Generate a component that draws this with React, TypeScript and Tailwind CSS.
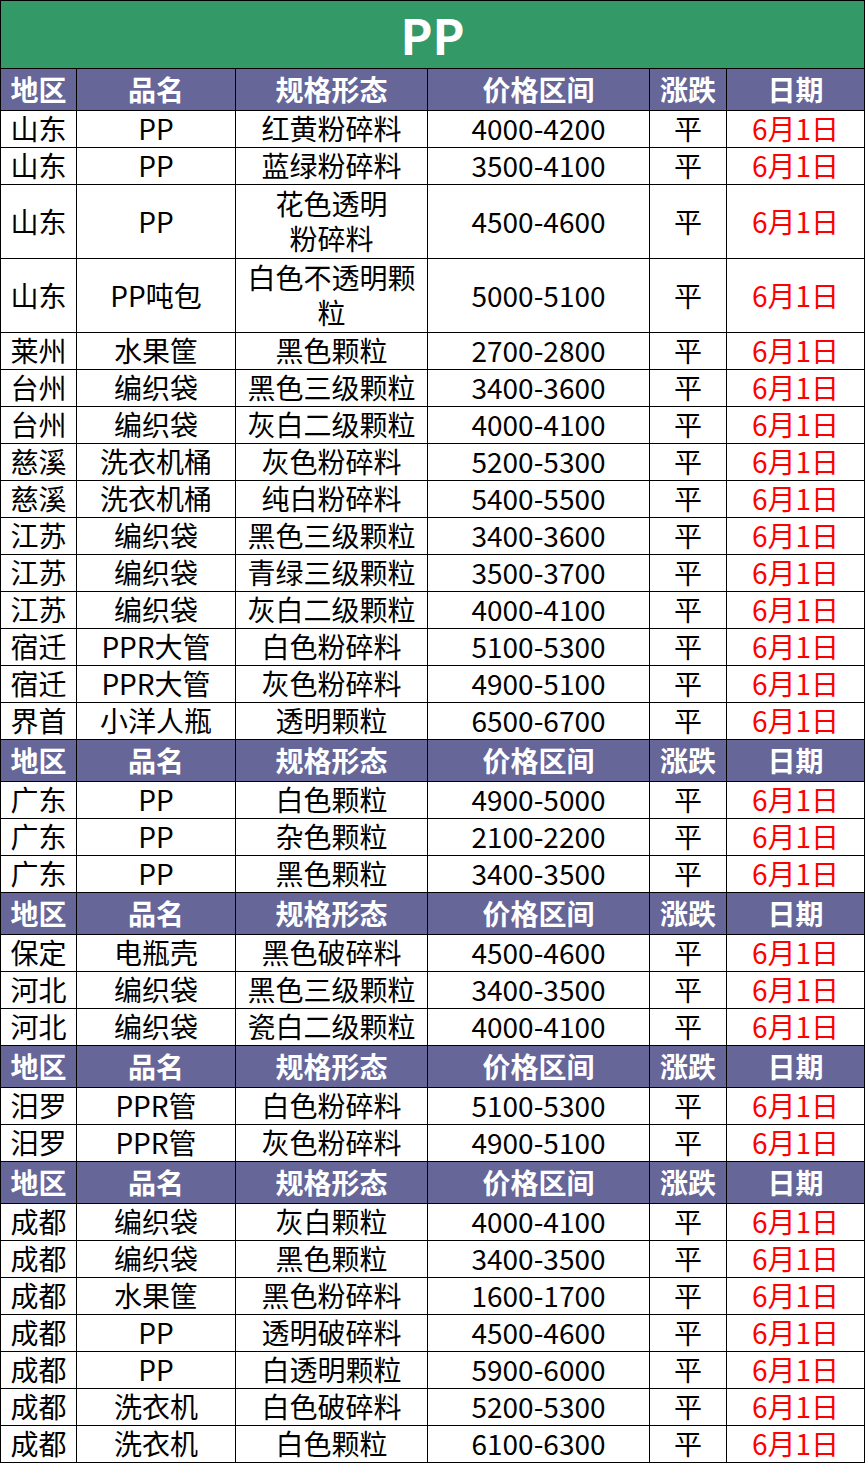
type Row = [string, string, string | string[], string];

const sections: Row[][] = [
  [
    ["山东", "PP", "红黄粉碎料", "4000-4200"],
    ["山东", "PP", "蓝绿粉碎料", "3500-4100"],
    ["山东", "PP", ["花色透明", "粉碎料"], "4500-4600"],
    ["山东", "PP吨包", ["白色不透明颗", "粒"], "5000-5100"],
    ["莱州", "水果筐", "黑色颗粒", "2700-2800"],
    ["台州", "编织袋", "黑色三级颗粒", "3400-3600"],
    ["台州", "编织袋", "灰白二级颗粒", "4000-4100"],
    ["慈溪", "洗衣机桶", "灰色粉碎料", "5200-5300"],
    ["慈溪", "洗衣机桶", "纯白粉碎料", "5400-5500"],
    ["江苏", "编织袋", "黑色三级颗粒", "3400-3600"],
    ["江苏", "编织袋", "青绿三级颗粒", "3500-3700"],
    ["江苏", "编织袋", "灰白二级颗粒", "4000-4100"],
    ["宿迁", "PPR大管", "白色粉碎料", "5100-5300"],
    ["宿迁", "PPR大管", "灰色粉碎料", "4900-5100"],
    ["界首", "小洋人瓶", "透明颗粒", "6500-6700"],
  ],
  [
    ["广东", "PP", "白色颗粒", "4900-5000"],
    ["广东", "PP", "杂色颗粒", "2100-2200"],
    ["广东", "PP", "黑色颗粒", "3400-3500"],
  ],
  [
    ["保定", "电瓶壳", "黑色破碎料", "4500-4600"],
    ["河北", "编织袋", "黑色三级颗粒", "3400-3500"],
    ["河北", "编织袋", "瓷白二级颗粒", "4000-4100"],
  ],
  [
    ["汨罗", "PPR管", "白色粉碎料", "5100-5300"],
    ["汨罗", "PPR管", "灰色粉碎料", "4900-5100"],
  ],
  [
    ["成都", "编织袋", "灰白颗粒", "4000-4100"],
    ["成都", "编织袋", "黑色颗粒", "3400-3500"],
    ["成都", "水果筐", "黑色粉碎料", "1600-1700"],
    ["成都", "PP", "透明破碎料", "4500-4600"],
    ["成都", "PP", "白透明颗粒", "5900-6000"],
    ["成都", "洗衣机", "白色破碎料", "5200-5300"],
    ["成都", "洗衣机", "白色颗粒", "6100-6300"],
  ],
];

const headers = ["地区", "品名", "规格形态", "价格区间", "涨跌", "日期"];
const grid = "grid grid-cols-[76px_159px_192px_222px_77px_138px]";
const cell = "flex items-center justify-center border-r border-b border-black text-center pb-[2px]";

function HeaderRow() {
  return (
    <div className={`${grid} h-[42px] bg-[#666699] text-white font-bold`}>
      {headers.map((h) => (
        <div key={h} className={cell}>
          {h}
        </div>
      ))}
    </div>
  );
}

function DataRow({ row }: { row: Row }) {
  const [area, name, spec, price] = row;
  const tall = Array.isArray(spec);
  return (
    <div className={`${grid} ${tall ? "h-[74px]" : "h-[37px]"} bg-white text-black`}>
      <div className={cell}>{area}</div>
      <div className={cell}>{name}</div>
      <div className={`${cell} flex-col`}>
        {tall
          ? (spec as string[]).map((s) => (
              <span key={s} className="block h-[35px] leading-[35px]">
                {s}
              </span>
            ))
          : spec}
      </div>
      <div className={cell}>{price}</div>
      <div className={cell}>平</div>
      <div className={`${cell} text-[#ff0000]`}>6月1日</div>
    </div>
  );
}

export default function App() {
  return (
    <div className="w-[865px] bg-white font-['Noto_Sans_CJK_SC','Noto_Sans',sans-serif] text-[28px] leading-none">
      <div className="border-l border-t border-black">
        <div className="h-[68px] bg-[#339966] border-r border-b border-black flex items-center justify-center pb-[2px]">
          <span className="text-white font-bold text-[48px]">PP</span>
        </div>
        {sections.map((rows, i) => (
          <div key={i}>
            <HeaderRow />
            {rows.map((r, j) => (
              <DataRow key={j} row={r} />
            ))}
          </div>
        ))}
      </div>
    </div>
  );
}
